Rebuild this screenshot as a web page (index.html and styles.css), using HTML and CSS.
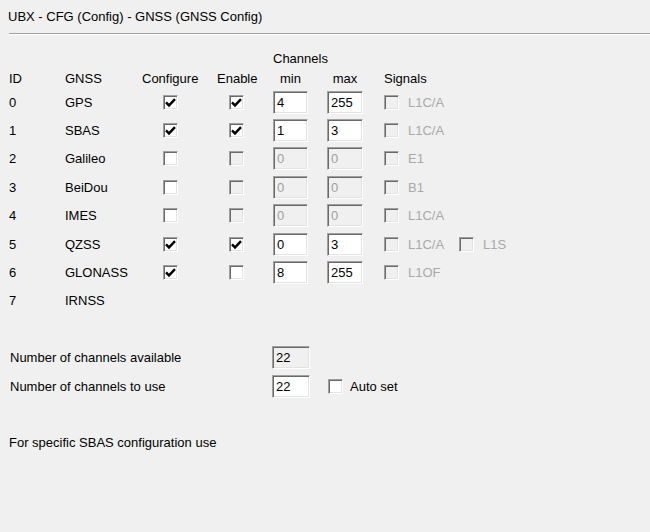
FILE: index.html
```html
<!DOCTYPE html>
<html>
<head>
<meta charset="utf-8">
<link rel="stylesheet" href="styles.css">
</head>
<body>
<div class="title">UBX - CFG (Config) - GNSS (GNSS Config)</div>
<div class="sep"></div>

<div class="grid">
  <div class="c5 chan">Channels</div>

  <div class="c1">ID</div>
  <div class="c2">GNSS</div>
  <div class="c3">Configure</div>
  <div class="c4">Enable</div>
  <div class="c5"><span class="hmin">min</span></div>
  <div class="c6"><span class="hmax">max</span></div>
  <div class="c7">Signals</div>

  <div class="c1">0</div><div class="c2">GPS</div>
  <div class="c3 cfg"><span class="cb"><svg viewBox="0 0 13 13" width="13" height="13"><path d="M2 6.3 L5 9.4 L11 3.2" /></svg></span></div>
  <div class="c4 en"><span class="cb"><svg viewBox="0 0 13 13" width="13" height="13"><path d="M2 6.3 L5 9.4 L11 3.2" /></svg></span></div>
  <div class="c5"><span class="tb">4</span></div>
  <div class="c6"><span class="tb wide">255</span></div>
  <div class="c7 sigs"><span class="sig"><span class="cb dis"></span><span class="gray">L1C/A</span></span></div>

  <div class="c1">1</div><div class="c2">SBAS</div>
  <div class="c3 cfg"><span class="cb"><svg viewBox="0 0 13 13" width="13" height="13"><path d="M2 6.3 L5 9.4 L11 3.2" /></svg></span></div>
  <div class="c4 en"><span class="cb"><svg viewBox="0 0 13 13" width="13" height="13"><path d="M2 6.3 L5 9.4 L11 3.2" /></svg></span></div>
  <div class="c5"><span class="tb">1</span></div>
  <div class="c6"><span class="tb wide">3</span></div>
  <div class="c7 sigs"><span class="sig"><span class="cb dis"></span><span class="gray">L1C/A</span></span></div>

  <div class="c1">2</div><div class="c2">Galileo</div>
  <div class="c3 cfg"><span class="cb"></span></div>
  <div class="c4 en"><span class="cb dis"></span></div>
  <div class="c5"><span class="tb dtb">0</span></div>
  <div class="c6"><span class="tb wide dtb">0</span></div>
  <div class="c7 sigs"><span class="sig"><span class="cb dis"></span><span class="gray">E1</span></span></div>

  <div class="c1">3</div><div class="c2">BeiDou</div>
  <div class="c3 cfg"><span class="cb"></span></div>
  <div class="c4 en"><span class="cb dis"></span></div>
  <div class="c5"><span class="tb dtb">0</span></div>
  <div class="c6"><span class="tb wide dtb">0</span></div>
  <div class="c7 sigs"><span class="sig"><span class="cb dis"></span><span class="gray">B1</span></span></div>

  <div class="c1">4</div><div class="c2">IMES</div>
  <div class="c3 cfg"><span class="cb"></span></div>
  <div class="c4 en"><span class="cb dis"></span></div>
  <div class="c5"><span class="tb dtb">0</span></div>
  <div class="c6"><span class="tb wide dtb">0</span></div>
  <div class="c7 sigs"><span class="sig"><span class="cb dis"></span><span class="gray">L1C/A</span></span></div>

  <div class="c1">5</div><div class="c2">QZSS</div>
  <div class="c3 cfg"><span class="cb"><svg viewBox="0 0 13 13" width="13" height="13"><path d="M2 6.3 L5 9.4 L11 3.2" /></svg></span></div>
  <div class="c4 en"><span class="cb"><svg viewBox="0 0 13 13" width="13" height="13"><path d="M2 6.3 L5 9.4 L11 3.2" /></svg></span></div>
  <div class="c5"><span class="tb">0</span></div>
  <div class="c6"><span class="tb wide">3</span></div>
  <div class="c7 sigs"><span class="sig"><span class="cb dis"></span><span class="gray">L1C/A</span></span><span class="sig"><span class="cb dis"></span><span class="gray">L1S</span></span></div>

  <div class="c1">6</div><div class="c2">GLONASS</div>
  <div class="c3 cfg"><span class="cb"><svg viewBox="0 0 13 13" width="13" height="13"><path d="M2 6.3 L5 9.4 L11 3.2" /></svg></span></div>
  <div class="c4 en"><span class="cb"></span></div>
  <div class="c5"><span class="tb">8</span></div>
  <div class="c6"><span class="tb wide">255</span></div>
  <div class="c7 sigs"><span class="sig"><span class="cb dis"></span><span class="gray">L1OF</span></span></div>

  <div class="c1">7</div><div class="c2">IRNSS</div>
</div>

<div class="bottom">
  <div class="brow">
    <span class="blabel">Number of channels available</span>
    <span class="tb btb dtb dark">22</span>
  </div>
  <div class="brow">
    <span class="blabel">Number of channels to use</span>
    <span class="tb btb">22</span>
    <span class="auto"><span class="cb"></span><span>Auto set</span></span>
  </div>
</div>

<div class="note">For specific SBAS configuration use</div>
</body>
</html>
```

FILE: styles.css
```css
html, body {
  margin: 0;
  padding: 0;
  background: #f0f0f0;
}
body {
  font-family: "Liberation Sans", Arial, sans-serif;
  font-size: 13px;
  line-height: 15px;
  color: #000;
  width: 650px;
  height: 532px;
  overflow: hidden;
}
.title {
  padding: 9px 0 0 8px;
  height: 15px;
}
.sep {
  margin: 9px 0 0 9px;
  border-top: 1px solid #a0a0a0;
  border-bottom: 1px solid #fff;
}
.grid {
  margin-top: 13px;
  padding-left: 9px;
  display: grid;
  grid-template-columns: 56px 77px 75px 56px 54px 57px 1fr;
  grid-template-rows: 21px 19px repeat(8, 28.4px);
  align-items: center;
}
.c1 { grid-column: 1; }
.c2 { grid-column: 2; }
.c3 { grid-column: 3; }
.c4 { grid-column: 4; }
.c5 { grid-column: 5; }
.c6 { grid-column: 6; }
.c7 { grid-column: 7; }
.chan { grid-column: 5 / span 2; }
.hmin, .hmax {
  display: inline-block;
  width: 35px;
  text-align: center;
}
.hmax { width: 36px; }
.cfg { padding-left: 21px; display: flex; }
.en { padding-left: 12px; display: flex; }
.c5, .c6 { display: flex; }
.cb {
  display: inline-block;
  box-sizing: border-box;
  width: 15px;
  height: 15px;
  border: 1px solid;
  border-color: #a0a0a0 #fff #fff #a0a0a0;
  box-shadow: inset 1px 1px #696969, inset -1px -1px #e3e3e3;
  background: #fff;
  flex: none;
}
.cb svg {
  display: block;
}
.cb path {
  fill: none;
  stroke: #000;
  stroke-width: 2.4;
}
.cb.dis {
  background: #f0f0f0;
}
.tb {
  display: inline-block;
  box-sizing: border-box;
  width: 35px;
  height: 23px;
  border: 1px solid;
  border-color: #a0a0a0 #fff #fff #a0a0a0;
  box-shadow: inset 1px 1px #696969, inset -1px -1px #e3e3e3;
  background: #fff;
  padding: 3px 0 0 3px;
  line-height: 15px;
}
.tb.wide { width: 36px; }
.tb.dtb {
  background: #f0f0f0;
  color: #a0a0a0;
}
.tb.dark { color: #000; }
.sigs {
  display: flex;
  align-items: center;
}
.sig {
  display: flex;
  align-items: center;
  width: 75px;
}
.sig .cb { margin-right: 9px; }
.gray { color: #a9a9a9; }
.bottom {
  margin-top: 28px;
  padding-left: 10px;
}
.brow {
  display: flex;
  align-items: center;
  height: 29px;
}
.blabel { width: 262px; }
.btb { width: 38px; }
.auto {
  display: flex;
  align-items: center;
  margin-left: 18px;
}
.auto .cb { margin-right: 7px; }
.note {
  margin-top: 34px;
  padding-left: 9px;
}
```
